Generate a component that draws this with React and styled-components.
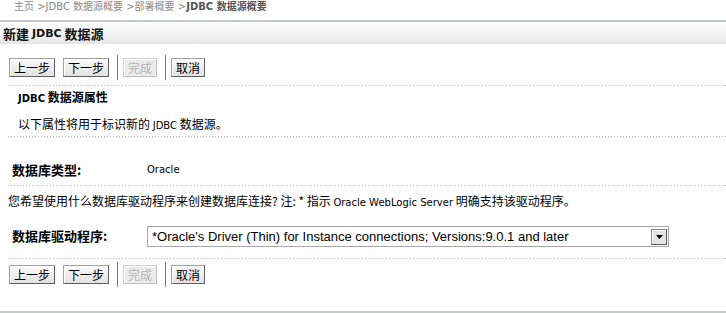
import React from "react";
import styled, { createGlobalStyle } from "styled-components";

const GlobalStyle = createGlobalStyle`
  html, body { margin: 0; padding: 0; background: #fff; }
  body {
    width: 726px;
    height: 313px;
    overflow: hidden;
    font-family: "DejaVu Sans", "Noto Sans CJK SC", sans-serif;
    color: #000;
  }
`;

const Page = styled.div`
  width: 726px;
  height: 313px;
  border-bottom: 2px solid #c4c8c8;
  box-sizing: border-box;
`;

const Crumbs = styled.div`
  height: 20px;
  box-sizing: border-box;
  padding: 1px 0 0 14px;
  line-height: 12px;
  font-size: 10px;
  color: #8a8a8a;
  white-space: pre;
  font-family: "DejaVu Sans", "Noto Sans CJK SC", sans-serif;
  b { color: #555; font-weight: bold; }
`;

const TitleBar = styled.div`
  height: 22px;
  border-top: 2px solid #c3c8cd;
  background: linear-gradient(#ffffff 0%, #f6f6f6 40%, #e4e6e4 100%);
  display: flex;
  align-items: center;
  padding-left: 3px;
  font-size: 13px;
  font-weight: bold;
  color: #111;
  font-family: "Noto Sans CJK SC", sans-serif;
  white-space: pre;
`;

const ButtonBar = styled.div`
  display: flex;
  align-items: center;
  gap: 8px;
  height: 25px;
  padding: ${(p) => p.$pad};
`;

const Btn = styled.button`
  height: 19px;
  padding: 0 4px;
  font-family: "Noto Sans CJK SC", sans-serif;
  font-size: 12px;
  line-height: 15px;
  color: ${(p) => (p.disabled ? "#b4b4b4" : "#000")};
  background: ${(p) =>
    p.disabled ? "#ececec" : "linear-gradient(#fbfbfb, #e2e2e2)"};
  border: 1px solid;
  border-color: ${(p) =>
    p.disabled ? "#d0d0d0 #c0c0c0 #c0c0c0 #d0d0d0" : "#a0a0a0 #5e5e5e #5e5e5e #a0a0a0"};
  border-radius: 0;
  box-shadow: inset 1px 1px 0 #fff;
`;

const Sep = styled.span`
  width: 1px;
  height: 25px;
  background: #7a7a7a;
  margin: 0 -3px 0 0;
`;

const Dotted = styled.div`
  margin: ${(p) => p.$m || "0"} 0 0 8px;
  height: 1px;
  background: repeating-linear-gradient(90deg, #b4b4b4 0 1px, transparent 1px 3px);
`;

const Section = styled.div`
  box-sizing: border-box;
  height: ${(p) => p.$h}px;
  padding: ${(p) => p.$pad};
  font-family: "Noto Sans CJK SC", sans-serif;
  font-size: 12px;
  line-height: 16px;
  white-space: pre;
  overflow: visible;
`;

const SubTitle = styled.div`
  font-weight: bold;
  font-size: 12px;
  line-height: 16px;
`;

const Latin = styled.span`
  font-family: "DejaVu Sans", sans-serif;
  font-size: ${(p) => p.$size || "10px"};
  font-weight: ${(p) => (p.$bold ? "bold" : "normal")};
  line-height: 1;
`;

const FieldRow = styled.div`
  box-sizing: border-box;
  height: ${(p) => p.$h}px;
  display: flex;
  align-items: flex-start;
  padding: ${(p) => p.$pad};
  font-family: "Noto Sans CJK SC", sans-serif;
  font-size: 12px;
`;

const Label = styled.div`
  width: 135px;
  font-weight: bold;
  font-size: 13px;
  line-height: ${(p) => p.$lh || 18}px;
`;

const Value = styled.div`
  font-family: "DejaVu Sans", sans-serif;
  font-size: 10px;
  line-height: 18px;
`;

const Select = styled.div`
  width: 522px;
  height: 21px;
  box-sizing: border-box;
  border: 1px solid #a8a8a8;
  display: flex;
  align-items: center;
  justify-content: space-between;
  padding-left: 4px;
  font-family: "Liberation Sans", Arial, sans-serif;
  font-size: 13px;
  background: #fff;
`;

const Arrow = styled.div`
  width: 16px;
  height: 16px;
  margin-right: 1px;
  box-sizing: border-box;
  border: 1px solid;
  border-color: #8a8a8a #5a5a5a #5a5a5a #8a8a8a;
  box-shadow: inset 1px 1px 0 #fff;
  background: #e4e4e4;
  display: flex;
  align-items: center;
  justify-content: center;
`;

const Buttons = ({ pad }) => (
  <ButtonBar $pad={pad}>
    <Btn>上一步</Btn>
    <Btn>下一步</Btn>
    <Sep />
    <Btn disabled>完成</Btn>
    <Sep />
    <Btn>取消</Btn>
  </ButtonBar>
);

const App = () => (
  <>
    <GlobalStyle />
    <Page>
      <Crumbs>
        主页 &gt;JDBC 数据源概要 &gt;部署概要 &gt;<b>JDBC 数据源概要</b>
      </Crumbs>
      <TitleBar>
        新建 <Latin $bold $size="11px">JDBC</Latin> 数据源
      </TitleBar>
      <Buttons pad="11px 0 0 9px" />
      <Dotted $m="5px" />
      <Section $h={20} $pad="3px 0 0 18px">
        <SubTitle>
          <Latin $bold>JDBC</Latin> 数据源属性
        </SubTitle>
      </Section>
      <Section $h={30} $pad="10px 0 0 18px">
        以下属性将用于标识新的 <Latin>JDBC</Latin> 数据源。
      </Section>
      <Dotted />
      <FieldRow $h={48} $pad="24px 0 0 12px">
        <Label>数据库类型:</Label>
        <Value>Oracle</Value>
      </FieldRow>
      <Dotted />
      <Section $h={22} $pad="7px 0 0 8px">
        您希望使用什么数据库驱动程序来创建数据库连接? 注: * 指示 <Latin>Oracle WebLogic Server</Latin> 明确支持该驱动程序。
      </Section>
      <FieldRow $h={39} $pad="18px 0 0 12px">
        <Label $lh={19}>数据库驱动程序:</Label>
        <Select>
          *Oracle's Driver (Thin) for Instance connections; Versions:9.0.1 and later
          <Arrow>
            <svg width="7" height="4" viewBox="0 0 7 4">
              <path d="M0 0h7L3.5 4z" fill="#000" />
            </svg>
          </Arrow>
        </Select>
      </FieldRow>
      <Dotted $m="11px" />
      <Buttons pad="3px 0 0 9px" />
    </Page>
  </>
);

export default App;
